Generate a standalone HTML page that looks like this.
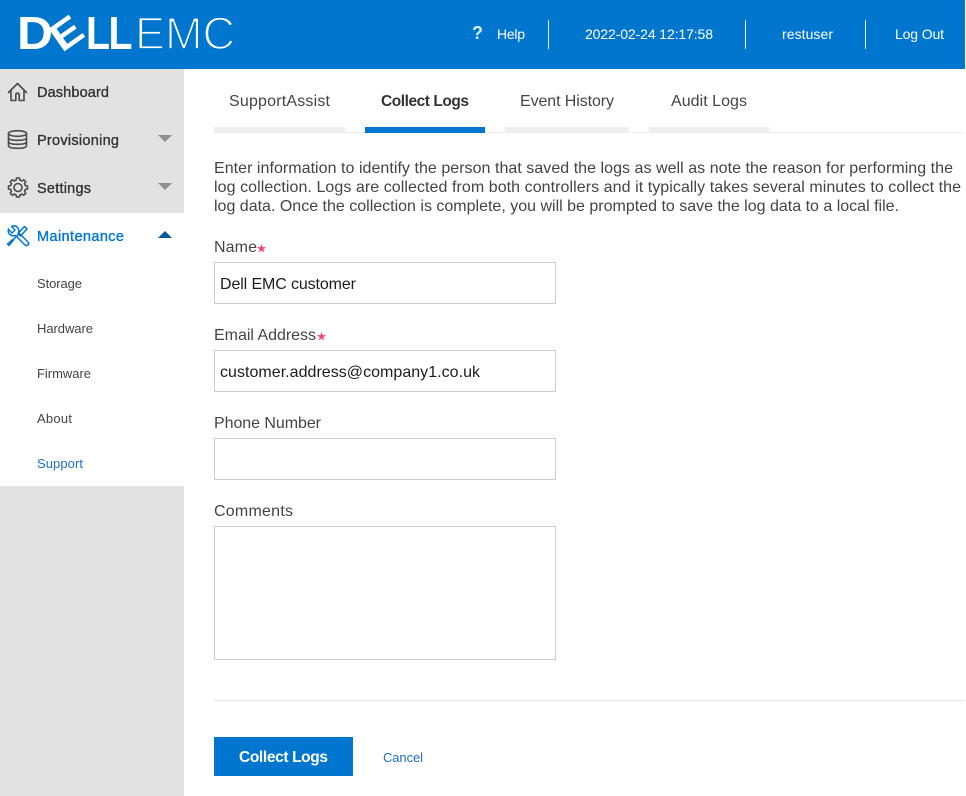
<!DOCTYPE html>
<html lang="en">
<head>
<meta charset="utf-8">
<title>Collect Logs</title>
<style>
html,body{margin:0;padding:0;width:966px;height:796px;overflow:hidden;background:#fff}
body{position:relative;font-family:"Liberation Sans",sans-serif}
.a{position:absolute}
#hdr{left:0;top:0;width:965px;height:69px;background:#0076ce}
.dv{width:1px;top:20px;height:29px;background:#e8f2fa}
#side1{left:0;top:69px;width:184px;height:144px;background:#e2e2e2}
#side2{left:0;top:486px;width:184px;height:310px;background:#e2e2e2}
.tab{top:127px;height:6px;background:#eeeeee}
.inp{left:214px;width:340px;border:1px solid #cccccc;background:#fff}
svg#t{position:absolute;left:0;top:0}
svg#t text{font-family:"Liberation Sans",sans-serif}
.n{font-size:14.5px;fill:#333;stroke:#333;stroke-width:.35px}
.s{font-size:13px;fill:#444}
.l{font-size:16px;fill:#444}
.v{font-size:16px;fill:#1c1c1c}
.h{font-size:14px;fill:#fff}
.p{font-size:16px;fill:#444}
</style>
</head>
<body>
<div class="a" id="hdr"></div>
<div class="a dv" style="left:548px"></div>
<div class="a dv" style="left:745px"></div>
<div class="a dv" style="left:865px"></div>
<div class="a" id="side1"></div>
<div class="a" id="side2"></div>
<div class="a" style="left:214px;top:132px;width:751px;height:1px;background:#eeeeee"></div>
<div class="a tab" style="left:214px;width:131px"></div>
<div class="a tab" style="left:365px;width:120px;background:#0076ce"></div>
<div class="a tab" style="left:505px;width:124px"></div>
<div class="a tab" style="left:649px;width:120px"></div>
<div class="a inp" style="top:262px;height:40px"></div>
<div class="a inp" style="top:350px;height:40px"></div>
<div class="a inp" style="top:438px;height:40px"></div>
<div class="a inp" style="top:526px;height:132px"></div>
<div class="a" style="left:214px;top:700px;width:751px;height:1px;background:#e6e6e6"></div>
<div class="a" style="left:214px;top:737px;width:139px;height:39px;background:#0076ce"></div>

<svg id="t" width="966" height="796" viewBox="0 0 966 796">
  <!-- logo -->
  <text x="17" y="49" font-size="46" font-weight="700" fill="#fff" textLength="36" lengthAdjust="spacingAndGlyphs">D</text>
  <text x="0" y="0" font-size="40" font-weight="700" fill="#fff" textLength="30" lengthAdjust="spacingAndGlyphs" transform="translate(62,53) rotate(-35)">E</text>
  <text x="86" y="49" font-size="46" font-weight="700" fill="#fff" textLength="24" lengthAdjust="spacingAndGlyphs">L</text>
  <text x="108.500" y="49" font-size="46" font-weight="700" fill="#fff" textLength="24" lengthAdjust="spacingAndGlyphs">L</text>
  <text x="135" y="49" font-size="45" fill="#fff" stroke="#0076ce" stroke-width="1.700" textLength="100" lengthAdjust="spacingAndGlyphs">EMC</text>

  <!-- header -->
  <text x="472" y="39" font-size="18" font-weight="700" fill="#dcecf8">?</text>
  <text class="h" x="497" y="39" textLength="28">Help</text>
  <text class="h" x="585" y="39" textLength="128">2022-02-24 12:17:58</text>
  <text class="h" x="782" y="39" textLength="51">restuser</text>
  <text class="h" x="895" y="39" textLength="49">Log Out</text>

  <!-- sidebar icons -->
  <g fill="none" stroke="#4a4a4a" stroke-width="1.600" stroke-linejoin="round" stroke-linecap="round">
    <path d="M8.500 92.500 17.500 83.500 26.500 92.500M11 91v9.500h4.800v-5.500q0-1.800 1.700-1.800t1.700 1.800v5.500H24V91"/>
    <ellipse cx="17.500" cy="133.500" rx="9" ry="2.800"/>
    <path d="M8.500 133.500v12q0 2.800 9 2.800t9-2.800v-12M8.500 137.500q0 2.800 9 2.800t9-2.800M8.500 141.500q0 2.800 9 2.800t9-2.800"/>
    <g transform="translate(18,187.500)">
      <circle r="4"/>
      <path d="M7.340-1.970 9.480-1.500V1.500L7.340 1.970 6.580 3.800 7.760 5.640 5.640 7.760 3.800 6.580 1.970 7.340 1.500 9.480H-1.500L-1.970 7.340-3.800 6.580-5.640 7.760-7.760 5.640-6.580 3.800-7.340 1.970-9.480 1.500V-1.500L-7.340-1.970-6.580-3.800-7.760-5.640-5.640-7.760-3.800-6.580-1.970-7.340-1.500-9.480H1.500L1.970-7.340 3.800-6.580 5.640-7.760 7.760-5.640 6.580-3.800Z"/>
    </g>
  </g>
  <g fill="none" stroke="#0076ce" stroke-width="1.500" stroke-linejoin="round" stroke-linecap="round">
    <path d="M8.500 229.500l3.500 3.500 3-3-3.500-3.500q4-1.500 6 1t1 5l9 9q2 2 .5 3.500t-3.500-.5l-9-9q-3 1-5.500-1t-1.500-5.500z"/>
    <path d="M24.500 226.500l2.500 2.500-6.500 7-2.500-2.500z"/>
    <path d="M18 235l-5.500 5.500M13.500 240l-3 3.500-1.500 2-1.500-1.500 2-1.500 3-3z"/>
  </g>

  <!-- sidebar text -->
  <text class="n" x="37" y="97" textLength="72">Dashboard</text>
  <text class="n" x="37" y="145" textLength="82">Provisioning</text>
  <text class="n" x="37" y="193" textLength="54">Settings</text>
  <text class="n" x="37" y="241" textLength="87" style="fill:#0076ce;stroke:#0076ce">Maintenance</text>
  <path d="M158 135h14l-7 7z" fill="#8f8f8f"/>
  <path d="M158 183h14l-7 7z" fill="#8f8f8f"/>
  <path d="M158 238h14l-7-7z" fill="#00589f"/>
  <text class="s" x="37" y="288" textLength="45">Storage</text>
  <text class="s" x="37" y="333" textLength="56">Hardware</text>
  <text class="s" x="37" y="378" textLength="54">Firmware</text>
  <text class="s" x="37" y="423" textLength="35">About</text>
  <text class="s" x="37" y="468" textLength="46" style="fill:#1f6fc4">Support</text>

  <!-- tabs -->
  <text class="l" x="229" y="106" textLength="101">SupportAssist</text>
  <text x="381" y="106" font-size="15.500" textLength="88" font-weight="700" fill="#333">Collect Logs</text>
  <text class="l" x="520" y="106" textLength="94">Event History</text>
  <text class="l" x="671" y="106" textLength="76">Audit Logs</text>

  <!-- paragraph -->
  <text class="p" x="214" y="173" textLength="739">Enter information to identify the person that saved the logs as well as note the reason for performing the</text>
  <text class="p" x="214" y="192" textLength="747">log collection. Logs are collected from both controllers and it typically takes several minutes to collect the</text>
  <text class="p" x="214" y="211" textLength="685">log data. Once the collection is complete, you will be prompted to save the log data to a local file.</text>

  <!-- form -->
  <text class="l" x="214" y="252" textLength="43">Name</text>
  <text x="261.500" y="252.500" font-size="12" fill="#f2486e" text-anchor="middle" style="font-family:'DejaVu Sans',sans-serif">★</text>
  <text class="v" x="220" y="289" textLength="136">Dell EMC customer</text>
  <text class="l" x="214" y="340" textLength="102">Email Address</text>
  <text x="321.500" y="340.500" font-size="12" fill="#f2486e" text-anchor="middle" style="font-family:'DejaVu Sans',sans-serif">★</text>
  <text class="v" x="220" y="377" textLength="260">customer.address@company1.co.uk</text>
  <text class="l" x="214" y="428" textLength="107">Phone Number</text>
  <text class="l" x="214" y="516" textLength="79">Comments</text>

  <!-- actions -->
  <text x="239" y="762" font-size="15.500" font-weight="700" fill="#fff" textLength="89">Collect Logs</text>
  <text x="383" y="762" font-size="13" fill="#1f6fc4" textLength="40">Cancel</text>
</svg>
</body>
</html>
